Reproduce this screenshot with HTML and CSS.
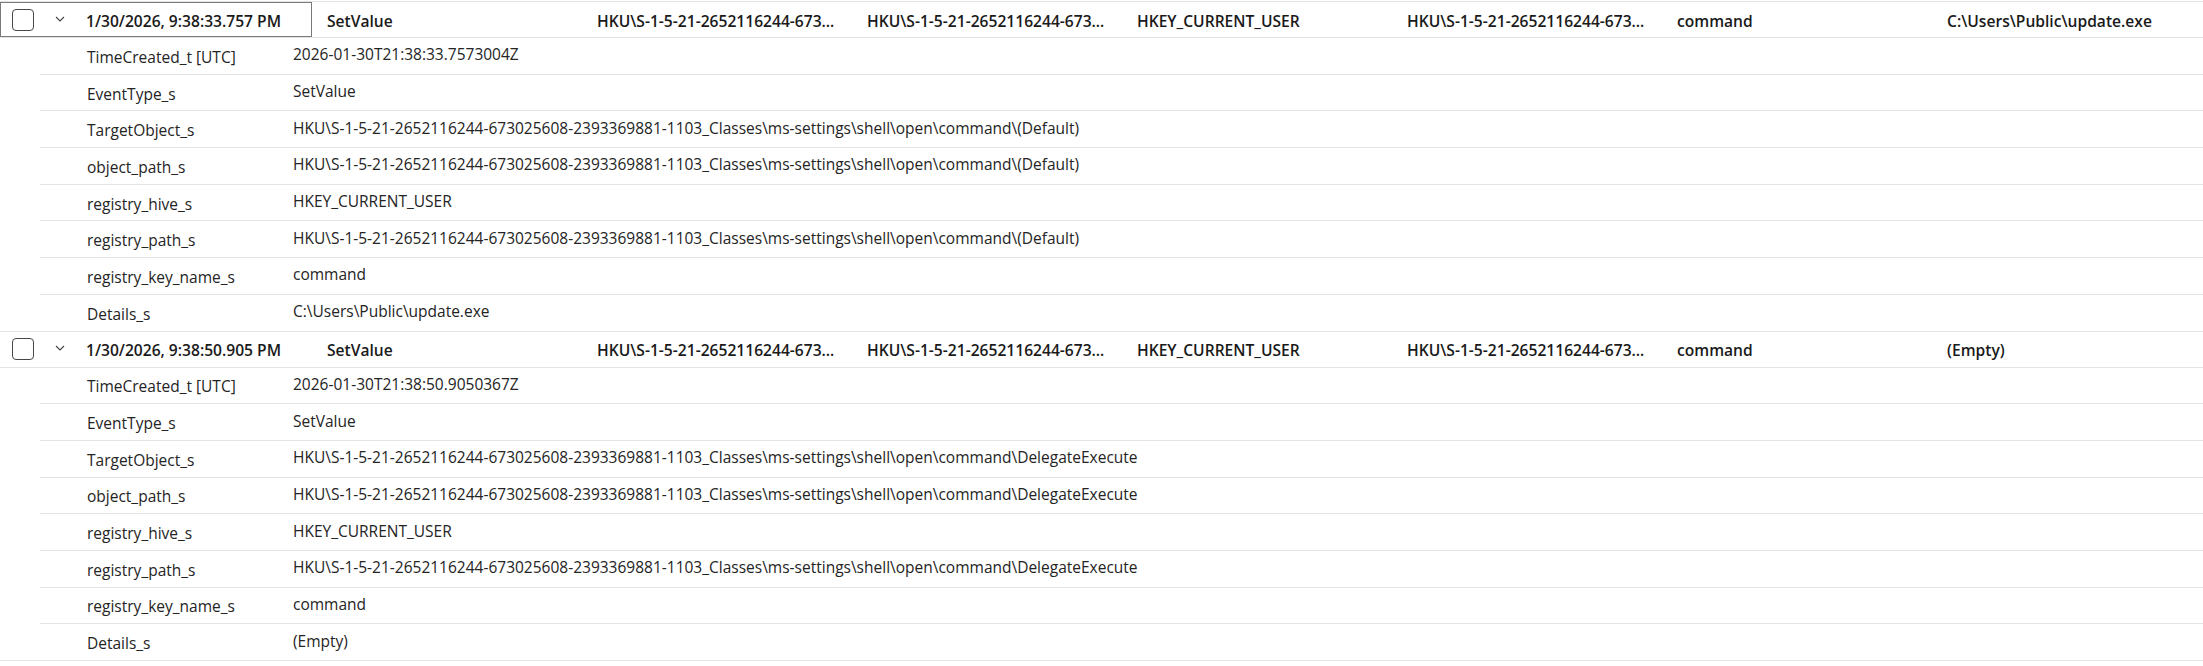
FILE: index.html
```html
<!DOCTYPE html>
<html lang="en">
<head>
<meta charset="utf-8">
<title>Registry events</title>
<link rel="stylesheet" href="styles.css">
</head>
<body>
<div class="grid">
  <div class="group">
    <div class="row main">
      <div class="lead focused">
        <span class="check"></span>
        <span class="chev"><svg width="10" height="6" viewBox="0 0 10 6"><path d="M1 1 L5 5 L9 1" fill="none" stroke="#424242" stroke-width="1.1"/></svg></span>
        <span class="date">1/30/2026, 9:38:33.757 PM</span>
      </div>
      <div class="cell">SetValue</div>
      <div class="cell">HKU\S-1-5-21-2652116244-673…</div>
      <div class="cell">HKU\S-1-5-21-2652116244-673…</div>
      <div class="cell">HKEY_CURRENT_USER</div>
      <div class="cell">HKU\S-1-5-21-2652116244-673…</div>
      <div class="cell">command</div>
      <div class="cell">C:\Users\Public\update.exe</div>
    </div>
    <div class="details">
      <div class="drow"><span class="key">TimeCreated_t [UTC]</span><span class="val">2026-01-30T21:38:33.7573004Z</span></div>
      <div class="drow"><span class="key">EventType_s</span><span class="val">SetValue</span></div>
      <div class="drow"><span class="key">TargetObject_s</span><span class="val">HKU\S-1-5-21-2652116244-673025608-2393369881-1103_Classes\ms-settings\shell\open\command\(Default)</span></div>
      <div class="drow"><span class="key">object_path_s</span><span class="val">HKU\S-1-5-21-2652116244-673025608-2393369881-1103_Classes\ms-settings\shell\open\command\(Default)</span></div>
      <div class="drow"><span class="key">registry_hive_s</span><span class="val">HKEY_CURRENT_USER</span></div>
      <div class="drow"><span class="key">registry_path_s</span><span class="val">HKU\S-1-5-21-2652116244-673025608-2393369881-1103_Classes\ms-settings\shell\open\command\(Default)</span></div>
      <div class="drow"><span class="key">registry_key_name_s</span><span class="val">command</span></div>
      <div class="drow"><span class="key">Details_s</span><span class="val">C:\Users\Public\update.exe</span></div>
    </div>
  </div>
  <div class="group">
    <div class="row main">
      <div class="lead">
        <span class="check"></span>
        <span class="chev"><svg width="10" height="6" viewBox="0 0 10 6"><path d="M1 1 L5 5 L9 1" fill="none" stroke="#424242" stroke-width="1.1"/></svg></span>
        <span class="date">1/30/2026, 9:38:50.905 PM</span>
      </div>
      <div class="cell">SetValue</div>
      <div class="cell">HKU\S-1-5-21-2652116244-673…</div>
      <div class="cell">HKU\S-1-5-21-2652116244-673…</div>
      <div class="cell">HKEY_CURRENT_USER</div>
      <div class="cell">HKU\S-1-5-21-2652116244-673…</div>
      <div class="cell">command</div>
      <div class="cell">(Empty)</div>
    </div>
    <div class="details">
      <div class="drow"><span class="key">TimeCreated_t [UTC]</span><span class="val">2026-01-30T21:38:50.9050367Z</span></div>
      <div class="drow"><span class="key">EventType_s</span><span class="val">SetValue</span></div>
      <div class="drow"><span class="key">TargetObject_s</span><span class="val">HKU\S-1-5-21-2652116244-673025608-2393369881-1103_Classes\ms-settings\shell\open\command\DelegateExecute</span></div>
      <div class="drow"><span class="key">object_path_s</span><span class="val">HKU\S-1-5-21-2652116244-673025608-2393369881-1103_Classes\ms-settings\shell\open\command\DelegateExecute</span></div>
      <div class="drow"><span class="key">registry_hive_s</span><span class="val">HKEY_CURRENT_USER</span></div>
      <div class="drow"><span class="key">registry_path_s</span><span class="val">HKU\S-1-5-21-2652116244-673025608-2393369881-1103_Classes\ms-settings\shell\open\command\DelegateExecute</span></div>
      <div class="drow"><span class="key">registry_key_name_s</span><span class="val">command</span></div>
      <div class="drow"><span class="key">Details_s</span><span class="val">(Empty)</span></div>
    </div>
  </div>
</div>
</body>
</html>
```
FILE: styles.css
```css
html, body {
  margin: 0;
  padding: 0;
  background: #ffffff;
}
body {
  font-family: "Open Sans", "Noto Sans", sans-serif;
  font-size: 15.5px;
  color: #242424;
  width: 2203px;
  overflow: hidden;
}
.grid {
  margin-top: 1px;
  border-top: 1px solid #e3e3e3;
}
.row.main {
  display: flex;
  align-items: stretch;
  height: 36px;
  box-sizing: border-box;
  border-bottom: 1px solid #e3e3e3;
  font-weight: 600;
  font-size: 15.6px;
  color: #1a1a1a;
  white-space: nowrap;
}
.lead {
  display: flex;
  align-items: center;
  width: 312px;
  box-sizing: border-box;
  border: 1px solid transparent;
  flex: none;
}
.lead.focused {
  border-color: #7a7a7a;
}
.check {
  width: 22px;
  height: 22px;
  box-sizing: border-box;
  border: 1.8px solid #474747;
  border-radius: 4px;
  margin-left: 11px;
  flex: none;
}
.chev {
  width: 52px;
  display: flex;
  justify-content: center;
  align-items: center;
  flex: none;
  padding-bottom: 2px;
}
.date {
  padding-top: 2px;
}
.cell {
  width: 270px;
  box-sizing: border-box;
  padding-left: 15px;
  padding-top: 2px;
  display: flex;
  align-items: center;
  flex: none;
}
.drow {
  display: flex;
  align-items: center;
  height: 36.7px;
  box-sizing: border-box;
  margin-left: 40px;
  border-bottom: 1px solid #e3e3e3;
  white-space: nowrap;
}
.drow:last-child {
  margin-left: 0;
  padding-left: 40px;
}
.key {
  width: 253px;
  box-sizing: border-box;
  padding-left: 47px;
  padding-top: 2px;
  flex: none;
}
.val {
  padding-bottom: 3px;
}
```
